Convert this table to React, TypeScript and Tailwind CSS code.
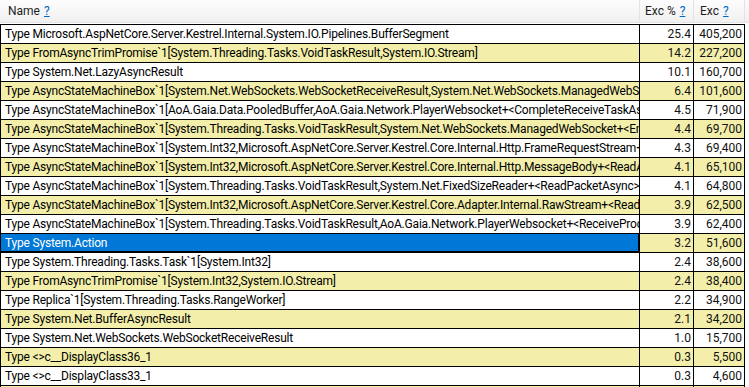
import React from "react";

type Row = { name: string; pct: string; exc: string };

const rows: Row[] = [
  { name: "Type Microsoft.AspNetCore.Server.Kestrel.Internal.System.IO.Pipelines.BufferSegment", pct: "25.4", exc: "405,200" },
  { name: "Type FromAsyncTrimPromise`1[System.Threading.Tasks.VoidTaskResult,System.IO.Stream]", pct: "14.2", exc: "227,200" },
  { name: "Type System.Net.LazyAsyncResult", pct: "10.1", exc: "160,700" },
  { name: "Type AsyncStateMachineBox`1[System.Net.WebSockets.WebSocketReceiveResult,System.Net.WebSockets.ManagedWebSocket+<ReceiveAsyncPrivate>d__61`2]", pct: "6.4", exc: "101,600" },
  { name: "Type AsyncStateMachineBox`1[AoA.Gaia.Data.PooledBuffer,AoA.Gaia.Network.PlayerWebsocket+<CompleteReceiveTaskAsync>d__22]", pct: "4.5", exc: "71,900" },
  { name: "Type AsyncStateMachineBox`1[System.Threading.Tasks.VoidTaskResult,System.Net.WebSockets.ManagedWebSocket+<EnsureBufferContainsAsync>d__70]", pct: "4.4", exc: "69,700" },
  { name: "Type AsyncStateMachineBox`1[System.Int32,Microsoft.AspNetCore.Server.Kestrel.Core.Internal.Http.FrameRequestStream+<ReadAsyncInternal>d__21]", pct: "4.3", exc: "69,400" },
  { name: "Type AsyncStateMachineBox`1[System.Int32,Microsoft.AspNetCore.Server.Kestrel.Core.Internal.Http.MessageBody+<ReadAsync>d__24]", pct: "4.1", exc: "65,100" },
  { name: "Type AsyncStateMachineBox`1[System.Threading.Tasks.VoidTaskResult,System.Net.FixedSizeReader+<ReadPacketAsync>d__1]", pct: "4.1", exc: "64,800" },
  { name: "Type AsyncStateMachineBox`1[System.Int32,Microsoft.AspNetCore.Server.Kestrel.Core.Adapter.Internal.RawStream+<ReadAsync>d__20]", pct: "3.9", exc: "62,500" },
  { name: "Type AsyncStateMachineBox`1[System.Threading.Tasks.VoidTaskResult,AoA.Gaia.Network.PlayerWebsocket+<ReceiveProcessAsync>d__25]", pct: "3.9", exc: "62,400" },
  { name: "Type System.Action", pct: "3.2", exc: "51,600" },
  { name: "Type System.Threading.Tasks.Task`1[System.Int32]", pct: "2.4", exc: "38,600" },
  { name: "Type FromAsyncTrimPromise`1[System.Int32,System.IO.Stream]", pct: "2.4", exc: "38,400" },
  { name: "Type Replica`1[System.Threading.Tasks.RangeWorker]", pct: "2.2", exc: "34,900" },
  { name: "Type System.Net.BufferAsyncResult", pct: "2.1", exc: "34,200" },
  { name: "Type System.Net.WebSockets.WebSocketReceiveResult", pct: "1.0", exc: "15,700" },
  { name: "Type <>c__DisplayClass36_1", pct: "0.3", exc: "5,500" },
  { name: "Type <>c__DisplayClass33_1", pct: "0.3", exc: "4,600" },
  { name: "", pct: "", exc: "" },
];

const SELECTED = 11;

function Help() {
  return <span className="ml-[4px] text-[#0066cc] underline underline-offset-[1px]">?</span>;
}

export default function App() {
  return (
    <div
      className="w-[749px] h-[387px] overflow-hidden bg-white text-[12px] text-black"
      style={{ fontFamily: "Roboto, 'Liberation Sans', sans-serif" }}
    >
      {/* header */}
      <div className="flex h-[23px] border-b border-[#e5e5e5] bg-gradient-to-b from-[#fdfdfd] to-[#f0f0f0] text-[#1e1e1e]">
        <div className="flex w-[640px] items-center border-r border-[#e3e3e3] pl-[8px]">
          <span>Name</span>
          <Help />
        </div>
        <div className="flex w-[54px] items-center border-r border-[#e3e3e3] pl-[5px]">
          <span>Exc %</span>
          <Help />
        </div>
        <div className="flex w-[51px] items-center border-r border-[#e3e3e3] pl-[6px]">
          <span>Exc</span>
          <Help />
        </div>
        <div className="flex-1" />
      </div>

      {/* rows */}
      <div className="mt-px">
        {rows.map((r, i) => {
          const yellow = i % 2 === 1;
          const sel = i === SELECTED;
          const bg = yellow ? "bg-[#f3efaa]" : "bg-white";
          return (
            <div key={i} className="flex h-[19px]">
              <div
                className={
                  "flex w-[639px] items-center overflow-hidden whitespace-nowrap border-l border-t border-black pl-[4px] tracking-[-0.2px] " +
                  (sel ? "bg-[#0078d7] text-white shadow-[inset_-1px_-1px_0_#000]" : bg)
                }
              >
                {r.name}
              </div>
              <div className={"flex w-[54px] items-center justify-end border-l border-t border-black pr-[2px] text-[#111] " + bg}>
                {r.pct}
              </div>
              <div className={"flex w-[52px] items-center justify-end border-l border-r border-t border-black pr-[2px] text-[#111] " + bg}>
                {r.exc}
              </div>
            </div>
          );
        })}
      </div>
    </div>
  );
}
